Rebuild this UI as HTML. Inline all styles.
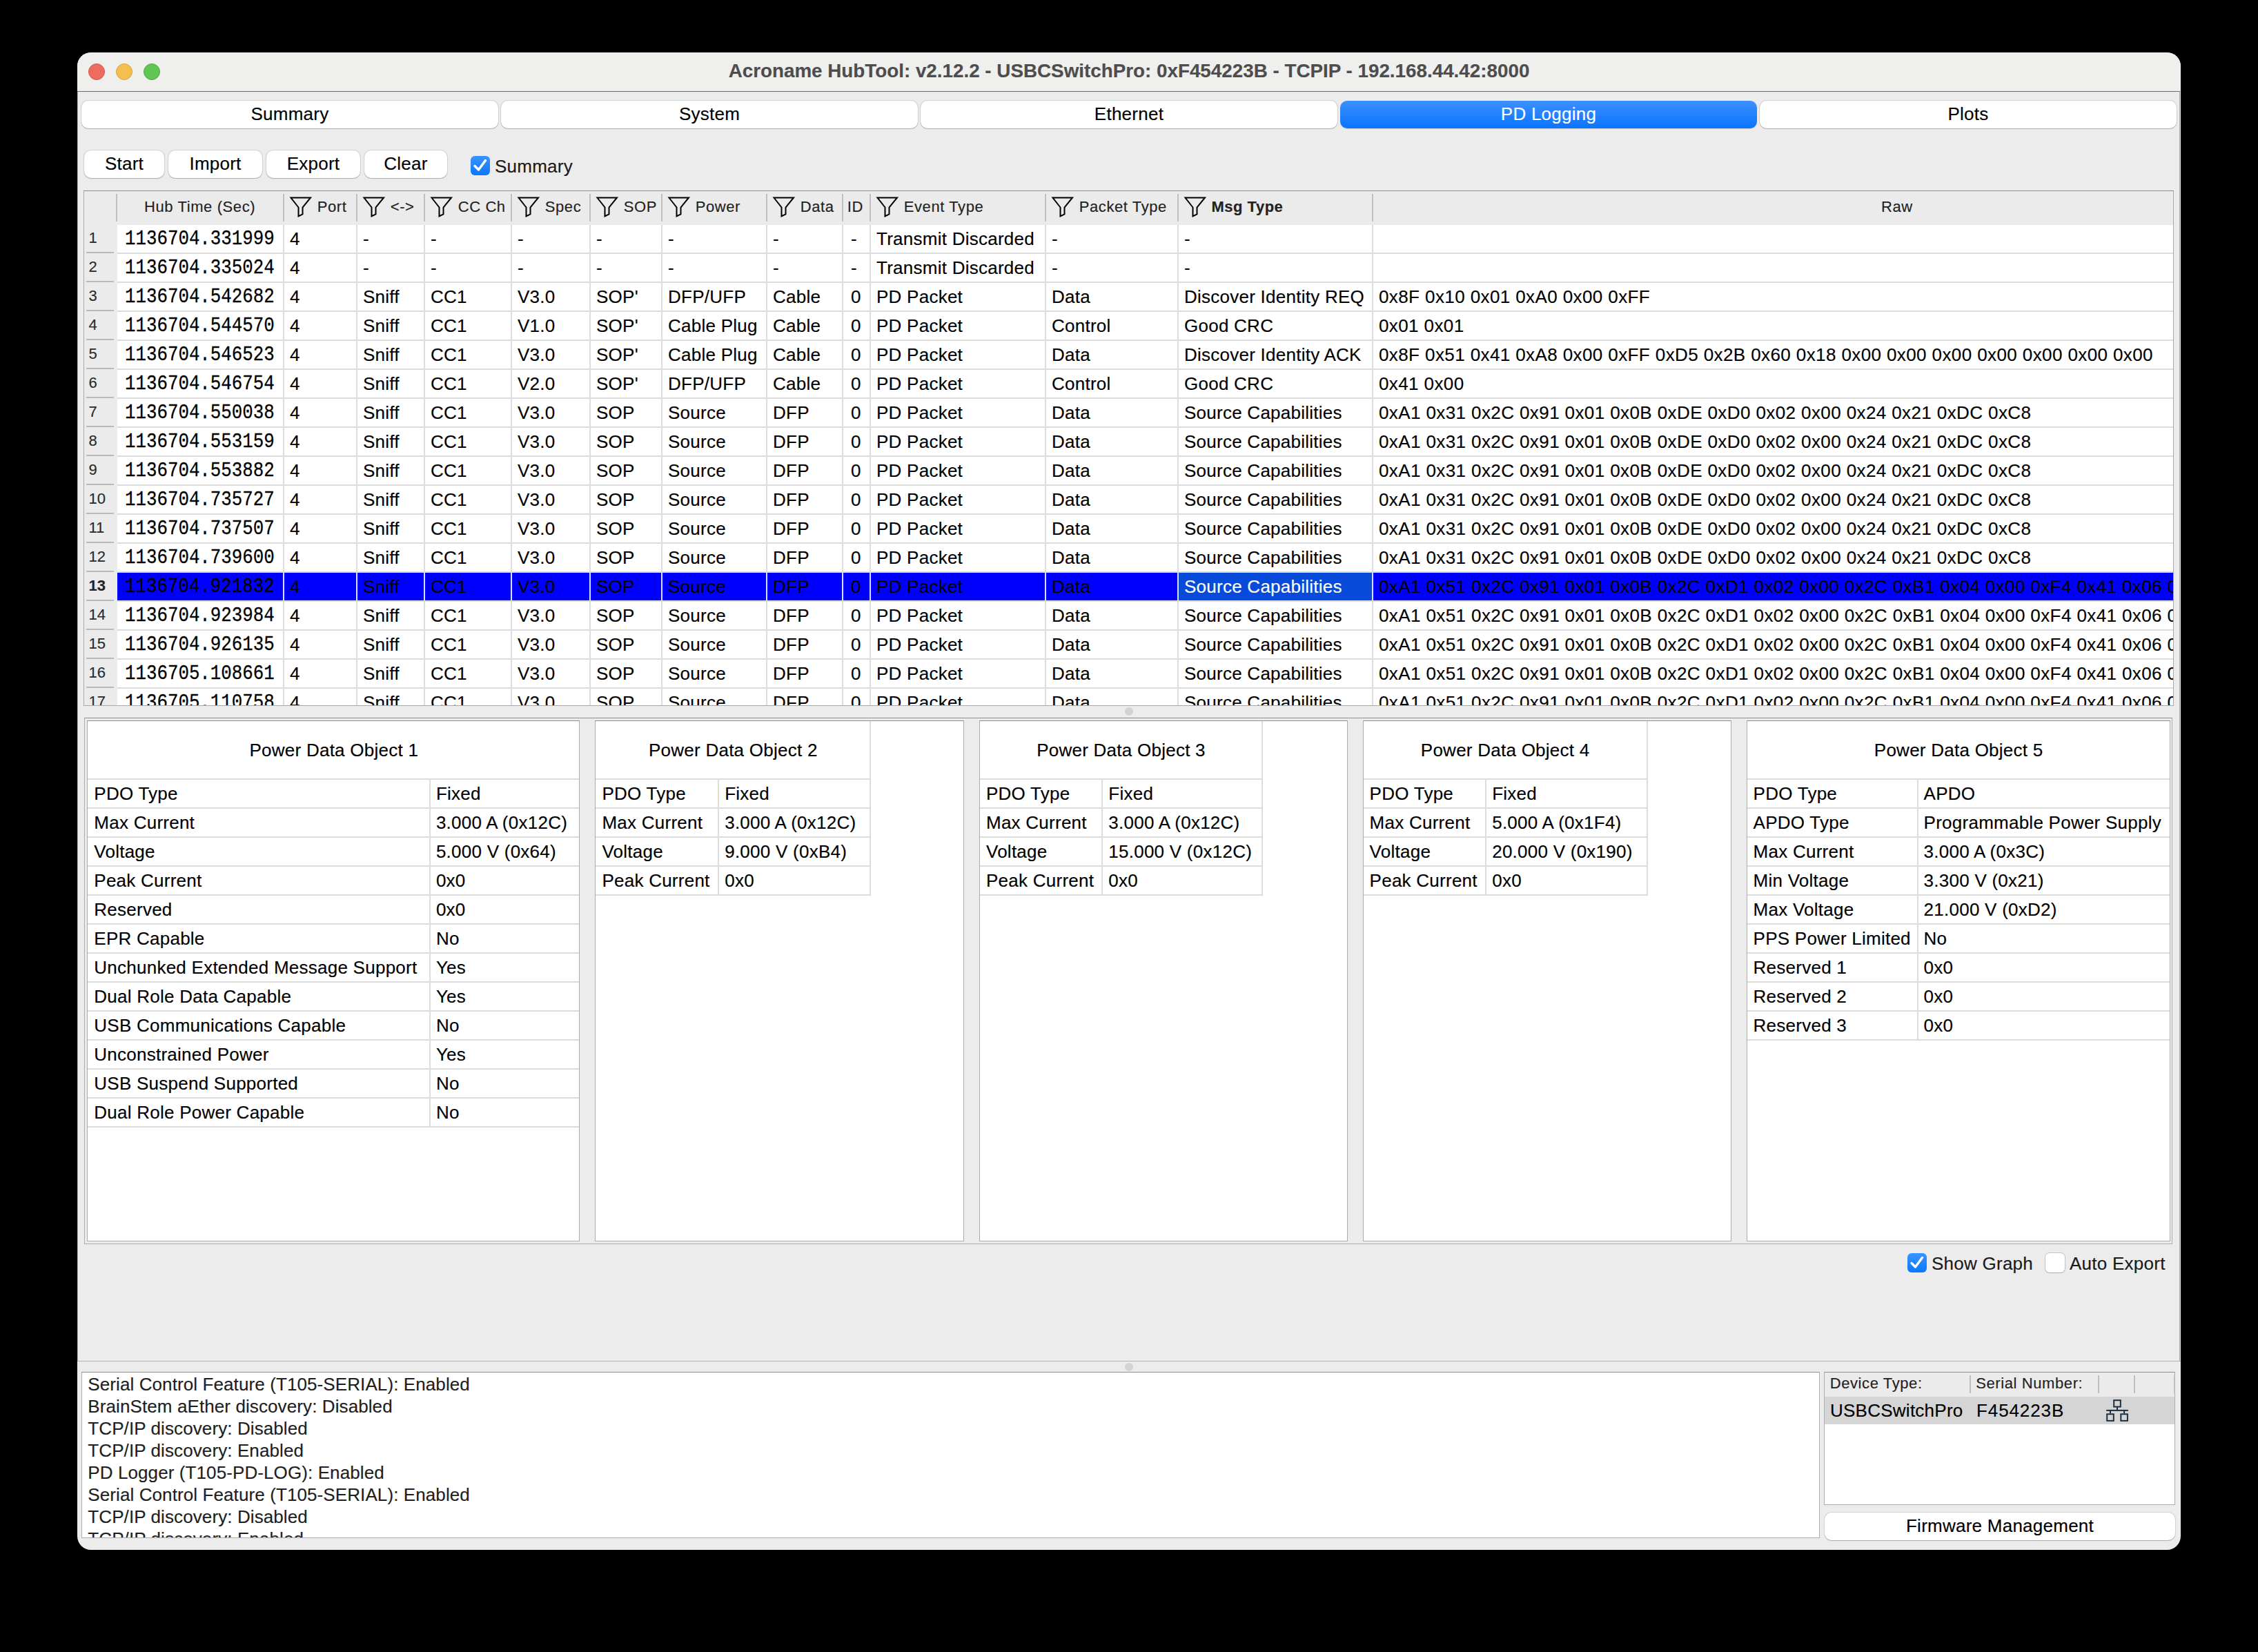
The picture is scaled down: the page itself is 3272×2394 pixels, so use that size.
<!DOCTYPE html><html><head><meta charset="utf-8"><title>Acroname HubTool</title><style>
html,body{margin:0;padding:0;}
body{width:3272px;height:2394px;background:#000;position:relative;overflow:hidden;font-family:"Liberation Sans",sans-serif;}
#win{position:absolute;left:112px;top:76px;width:3048px;height:2170px;border-radius:20px;background:#ececec;overflow:hidden;}
#win div{position:absolute;box-sizing:border-box;}
#win div.t{white-space:pre;-webkit-text-stroke:0.15px currentColor;}
#win svg{position:absolute;}
</style></head><body><div id="win">
<div style="left:0.00px;top:0.00px;width:3048.00px;height:56.00px;background:#efefee;"></div>
<div style="left:0.00px;top:56.00px;width:3047.00px;height:1.00px;background:#6b6b6b;"></div>
<div style="left:16.00px;top:16.00px;width:24.00px;height:24.00px;border-radius:50%;background:#ed6b5f;border:1px solid #d0584b;"></div>
<div style="left:56.00px;top:16.00px;width:24.00px;height:24.00px;border-radius:50%;background:#f5bf4f;border:1px solid #d9a140;"></div>
<div style="left:96.00px;top:16.00px;width:24.00px;height:24.00px;border-radius:50%;background:#61c554;border:1px solid #4fa83f;"></div>
<div class="t" style="top:12.86px;font-size:27.8px;line-height:27.8px;height:27.8px;color:#4d4d4d;font-weight:700;left:24.00px;width:3000px;text-align:center;">Acroname HubTool: v2.12.2 - USBCSwitchPro: 0xF454223B - TCPIP - 192.168.44.42:8000</div>
<div style="left:0.00px;top:57.00px;width:1.00px;height:1840.00px;background:#b4b4b4;"></div>
<div style="left:3046.00px;top:57.00px;width:1.00px;height:1840.00px;background:#a0a0a0;"></div>
<div style="left:6.00px;top:70.00px;width:604.00px;height:40.00px;border-radius:10px;background:#fff;box-shadow:0 0 0 1px rgba(0,0,0,0.10),0 1px 1px rgba(0,0,0,0.18);"></div>
<div class="t" style="top:75.79px;font-size:26px;line-height:26px;height:26px;color:#000;letter-spacing:0.25px;left:-1192.00px;width:3000px;text-align:center;">Summary</div>
<div style="left:614.00px;top:70.00px;width:604.00px;height:40.00px;border-radius:10px;background:#fff;box-shadow:0 0 0 1px rgba(0,0,0,0.10),0 1px 1px rgba(0,0,0,0.18);"></div>
<div class="t" style="top:75.79px;font-size:26px;line-height:26px;height:26px;color:#000;letter-spacing:0.25px;left:-584.00px;width:3000px;text-align:center;">System</div>
<div style="left:1222.00px;top:70.00px;width:604.00px;height:40.00px;border-radius:10px;background:#fff;box-shadow:0 0 0 1px rgba(0,0,0,0.10),0 1px 1px rgba(0,0,0,0.18);"></div>
<div class="t" style="top:75.79px;font-size:26px;line-height:26px;height:26px;color:#000;letter-spacing:0.25px;left:24.00px;width:3000px;text-align:center;">Ethernet</div>
<div style="left:1830.00px;top:70.00px;width:604.00px;height:40.00px;border-radius:10px;background:linear-gradient(#3c90fd,#0a74fe);box-shadow:0 1px 1px rgba(0,0,0,0.15);"></div>
<div class="t" style="top:75.79px;font-size:26px;line-height:26px;height:26px;color:#fff;letter-spacing:0.25px;left:632.00px;width:3000px;text-align:center;">PD Logging</div>
<div style="left:2438.00px;top:70.00px;width:604.00px;height:40.00px;border-radius:10px;background:#fff;box-shadow:0 0 0 1px rgba(0,0,0,0.10),0 1px 1px rgba(0,0,0,0.18);"></div>
<div class="t" style="top:75.79px;font-size:26px;line-height:26px;height:26px;color:#000;letter-spacing:0.25px;left:1240.00px;width:3000px;text-align:center;">Plots</div>
<div style="left:10.00px;top:142.00px;width:116.00px;height:40.00px;border-radius:10px;background:#fff;box-shadow:0 0 0 1px rgba(0,0,0,0.10),0 1px 1px rgba(0,0,0,0.18);"></div>
<div class="t" style="top:147.99px;font-size:26px;line-height:26px;height:26px;color:#000;letter-spacing:0.25px;left:-1432.00px;width:3000px;text-align:center;">Start</div>
<div style="left:132.00px;top:142.00px;width:136.00px;height:40.00px;border-radius:10px;background:#fff;box-shadow:0 0 0 1px rgba(0,0,0,0.10),0 1px 1px rgba(0,0,0,0.18);"></div>
<div class="t" style="top:147.99px;font-size:26px;line-height:26px;height:26px;color:#000;letter-spacing:0.25px;left:-1300.00px;width:3000px;text-align:center;">Import</div>
<div style="left:274.00px;top:142.00px;width:136.00px;height:40.00px;border-radius:10px;background:#fff;box-shadow:0 0 0 1px rgba(0,0,0,0.10),0 1px 1px rgba(0,0,0,0.18);"></div>
<div class="t" style="top:147.99px;font-size:26px;line-height:26px;height:26px;color:#000;letter-spacing:0.25px;left:-1158.00px;width:3000px;text-align:center;">Export</div>
<div style="left:416.00px;top:142.00px;width:120.00px;height:40.00px;border-radius:10px;background:#fff;box-shadow:0 0 0 1px rgba(0,0,0,0.10),0 1px 1px rgba(0,0,0,0.18);"></div>
<div class="t" style="top:147.99px;font-size:26px;line-height:26px;height:26px;color:#000;letter-spacing:0.25px;left:-1024.00px;width:3000px;text-align:center;">Clear</div>
<div style="left:570.00px;top:150.00px;width:28.00px;height:28.00px;border-radius:6px;background:linear-gradient(#3a94ff,#0a77ff);"></div>
<svg style="left:570px;top:150px" width="28" height="28" viewBox="0 0 28 28"><path d="M6 14.5 L11.5 20 L21.5 6.5" fill="none" stroke="#fff" stroke-width="3.4" stroke-linecap="round" stroke-linejoin="round"/></svg>
<div class="t" style="top:151.99px;font-size:26px;line-height:26px;height:26px;color:#1a1a1a;letter-spacing:0.25px;left:605.00px;">Summary</div>
<div style="left:8.50px;top:200.00px;width:3029.50px;height:746.50px;background:#fff;border:1px solid #a9a9a9;border-top-color:#8c8c8c;"></div>
<div style="left:9.50px;top:201.00px;width:3027.50px;height:49.00px;background:#ebebeb;"></div>
<div style="left:9.50px;top:250.00px;width:48.20px;height:695.50px;background:#ebebeb;"></div>
<div style="left:57.70px;top:754.00px;width:2979.30px;height:40.00px;background:#0000ff;"></div>
<div style="left:1596.00px;top:754.00px;width:280.00px;height:40.00px;background:#084bda;"></div>
<div style="left:57.70px;top:290.00px;width:2979.30px;height:2.00px;background:#dcdcdc;"></div>
<div style="left:13.00px;top:289.00px;width:40.00px;height:2.00px;background:#bababa;"></div>
<div style="left:57.70px;top:332.00px;width:2979.30px;height:2.00px;background:#dcdcdc;"></div>
<div style="left:13.00px;top:331.00px;width:40.00px;height:2.00px;background:#bababa;"></div>
<div style="left:57.70px;top:374.00px;width:2979.30px;height:2.00px;background:#dcdcdc;"></div>
<div style="left:13.00px;top:373.00px;width:40.00px;height:2.00px;background:#bababa;"></div>
<div style="left:57.70px;top:416.00px;width:2979.30px;height:2.00px;background:#dcdcdc;"></div>
<div style="left:13.00px;top:415.00px;width:40.00px;height:2.00px;background:#bababa;"></div>
<div style="left:57.70px;top:458.00px;width:2979.30px;height:2.00px;background:#dcdcdc;"></div>
<div style="left:13.00px;top:457.00px;width:40.00px;height:2.00px;background:#bababa;"></div>
<div style="left:57.70px;top:500.00px;width:2979.30px;height:2.00px;background:#dcdcdc;"></div>
<div style="left:13.00px;top:499.00px;width:40.00px;height:2.00px;background:#bababa;"></div>
<div style="left:57.70px;top:542.00px;width:2979.30px;height:2.00px;background:#dcdcdc;"></div>
<div style="left:13.00px;top:541.00px;width:40.00px;height:2.00px;background:#bababa;"></div>
<div style="left:57.70px;top:584.00px;width:2979.30px;height:2.00px;background:#dcdcdc;"></div>
<div style="left:13.00px;top:583.00px;width:40.00px;height:2.00px;background:#bababa;"></div>
<div style="left:57.70px;top:626.00px;width:2979.30px;height:2.00px;background:#dcdcdc;"></div>
<div style="left:13.00px;top:625.00px;width:40.00px;height:2.00px;background:#bababa;"></div>
<div style="left:57.70px;top:668.00px;width:2979.30px;height:2.00px;background:#dcdcdc;"></div>
<div style="left:13.00px;top:667.00px;width:40.00px;height:2.00px;background:#bababa;"></div>
<div style="left:57.70px;top:710.00px;width:2979.30px;height:2.00px;background:#dcdcdc;"></div>
<div style="left:13.00px;top:709.00px;width:40.00px;height:2.00px;background:#bababa;"></div>
<div style="left:57.70px;top:752.00px;width:2979.30px;height:2.00px;background:#dcdcdc;"></div>
<div style="left:13.00px;top:751.00px;width:40.00px;height:2.00px;background:#bababa;"></div>
<div style="left:57.70px;top:794.00px;width:2979.30px;height:2.00px;background:#dcdcdc;"></div>
<div style="left:13.00px;top:793.00px;width:40.00px;height:2.00px;background:#bababa;"></div>
<div style="left:57.70px;top:836.00px;width:2979.30px;height:2.00px;background:#dcdcdc;"></div>
<div style="left:13.00px;top:835.00px;width:40.00px;height:2.00px;background:#bababa;"></div>
<div style="left:57.70px;top:878.00px;width:2979.30px;height:2.00px;background:#dcdcdc;"></div>
<div style="left:13.00px;top:877.00px;width:40.00px;height:2.00px;background:#bababa;"></div>
<div style="left:57.70px;top:920.00px;width:2979.30px;height:2.00px;background:#dcdcdc;"></div>
<div style="left:13.00px;top:919.00px;width:40.00px;height:2.00px;background:#bababa;"></div>
<div style="left:298.00px;top:250.00px;width:2.00px;height:695.50px;background:#dcdcdc;"></div>
<div style="left:404.00px;top:250.00px;width:2.00px;height:695.50px;background:#dcdcdc;"></div>
<div style="left:502.00px;top:250.00px;width:2.00px;height:695.50px;background:#dcdcdc;"></div>
<div style="left:628.00px;top:250.00px;width:2.00px;height:695.50px;background:#dcdcdc;"></div>
<div style="left:742.00px;top:250.00px;width:2.00px;height:695.50px;background:#dcdcdc;"></div>
<div style="left:846.00px;top:250.00px;width:2.00px;height:695.50px;background:#dcdcdc;"></div>
<div style="left:998.00px;top:250.00px;width:2.00px;height:695.50px;background:#dcdcdc;"></div>
<div style="left:1108.00px;top:250.00px;width:2.00px;height:695.50px;background:#dcdcdc;"></div>
<div style="left:1148.00px;top:250.00px;width:2.00px;height:695.50px;background:#dcdcdc;"></div>
<div style="left:1402.00px;top:250.00px;width:2.00px;height:695.50px;background:#dcdcdc;"></div>
<div style="left:1594.00px;top:250.00px;width:2.00px;height:695.50px;background:#dcdcdc;"></div>
<div style="left:1876.00px;top:250.00px;width:2.00px;height:695.50px;background:#dcdcdc;"></div>
<div style="left:56.00px;top:205.00px;width:2.00px;height:40.00px;background:#c0c0c0;"></div>
<div style="left:298.00px;top:205.00px;width:2.00px;height:40.00px;background:#c0c0c0;"></div>
<div style="left:404.00px;top:205.00px;width:2.00px;height:40.00px;background:#c0c0c0;"></div>
<div style="left:502.00px;top:205.00px;width:2.00px;height:40.00px;background:#c0c0c0;"></div>
<div style="left:628.00px;top:205.00px;width:2.00px;height:40.00px;background:#c0c0c0;"></div>
<div style="left:742.00px;top:205.00px;width:2.00px;height:40.00px;background:#c0c0c0;"></div>
<div style="left:846.00px;top:205.00px;width:2.00px;height:40.00px;background:#c0c0c0;"></div>
<div style="left:998.00px;top:205.00px;width:2.00px;height:40.00px;background:#c0c0c0;"></div>
<div style="left:1108.00px;top:205.00px;width:2.00px;height:40.00px;background:#c0c0c0;"></div>
<div style="left:1148.00px;top:205.00px;width:2.00px;height:40.00px;background:#c0c0c0;"></div>
<div style="left:1402.00px;top:205.00px;width:2.00px;height:40.00px;background:#c0c0c0;"></div>
<div style="left:1594.00px;top:205.00px;width:2.00px;height:40.00px;background:#c0c0c0;"></div>
<div style="left:1876.00px;top:205.00px;width:2.00px;height:40.00px;background:#c0c0c0;"></div>
<div class="t" style="top:213.37px;font-size:22px;line-height:22px;height:22px;color:#222;letter-spacing:0.6px;left:97.00px;">Hub Time (Sec)</div>
<svg style="left:306.50px;top:208.00px" width="34" height="33" viewBox="0 0 34 33"><path d="M2.5 2.5 H31 L19.5 16.5 V26.5 L13.5 29.5 V16.5 Z" fill="none" stroke="#000" stroke-width="2.0" stroke-linejoin="miter"/></svg>
<div class="t" style="top:213.37px;font-size:22px;line-height:22px;height:22px;color:#222;letter-spacing:0.6px;left:347.70px;">Port</div>
<svg style="left:412.50px;top:208.00px" width="34" height="33" viewBox="0 0 34 33"><path d="M2.5 2.5 H31 L19.5 16.5 V26.5 L13.5 29.5 V16.5 Z" fill="none" stroke="#000" stroke-width="2.0" stroke-linejoin="miter"/></svg>
<div class="t" style="top:213.37px;font-size:22px;line-height:22px;height:22px;color:#222;letter-spacing:0.6px;left:453.70px;">&lt;-&gt;</div>
<svg style="left:510.50px;top:208.00px" width="34" height="33" viewBox="0 0 34 33"><path d="M2.5 2.5 H31 L19.5 16.5 V26.5 L13.5 29.5 V16.5 Z" fill="none" stroke="#000" stroke-width="2.0" stroke-linejoin="miter"/></svg>
<div class="t" style="top:213.37px;font-size:22px;line-height:22px;height:22px;color:#222;letter-spacing:0.6px;left:551.70px;">CC Ch</div>
<svg style="left:636.50px;top:208.00px" width="34" height="33" viewBox="0 0 34 33"><path d="M2.5 2.5 H31 L19.5 16.5 V26.5 L13.5 29.5 V16.5 Z" fill="none" stroke="#000" stroke-width="2.0" stroke-linejoin="miter"/></svg>
<div class="t" style="top:213.37px;font-size:22px;line-height:22px;height:22px;color:#222;letter-spacing:0.6px;left:677.70px;">Spec</div>
<svg style="left:750.50px;top:208.00px" width="34" height="33" viewBox="0 0 34 33"><path d="M2.5 2.5 H31 L19.5 16.5 V26.5 L13.5 29.5 V16.5 Z" fill="none" stroke="#000" stroke-width="2.0" stroke-linejoin="miter"/></svg>
<div class="t" style="top:213.37px;font-size:22px;line-height:22px;height:22px;color:#222;letter-spacing:0.6px;left:791.70px;">SOP</div>
<svg style="left:854.50px;top:208.00px" width="34" height="33" viewBox="0 0 34 33"><path d="M2.5 2.5 H31 L19.5 16.5 V26.5 L13.5 29.5 V16.5 Z" fill="none" stroke="#000" stroke-width="2.0" stroke-linejoin="miter"/></svg>
<div class="t" style="top:213.37px;font-size:22px;line-height:22px;height:22px;color:#222;letter-spacing:0.6px;left:895.70px;">Power</div>
<svg style="left:1006.50px;top:208.00px" width="34" height="33" viewBox="0 0 34 33"><path d="M2.5 2.5 H31 L19.5 16.5 V26.5 L13.5 29.5 V16.5 Z" fill="none" stroke="#000" stroke-width="2.0" stroke-linejoin="miter"/></svg>
<div class="t" style="top:213.37px;font-size:22px;line-height:22px;height:22px;color:#222;letter-spacing:0.6px;left:1047.70px;">Data</div>
<svg style="left:1156.50px;top:208.00px" width="34" height="33" viewBox="0 0 34 33"><path d="M2.5 2.5 H31 L19.5 16.5 V26.5 L13.5 29.5 V16.5 Z" fill="none" stroke="#000" stroke-width="2.0" stroke-linejoin="miter"/></svg>
<div class="t" style="top:213.37px;font-size:22px;line-height:22px;height:22px;color:#222;letter-spacing:0.6px;left:1197.70px;">Event Type</div>
<svg style="left:1410.50px;top:208.00px" width="34" height="33" viewBox="0 0 34 33"><path d="M2.5 2.5 H31 L19.5 16.5 V26.5 L13.5 29.5 V16.5 Z" fill="none" stroke="#000" stroke-width="2.0" stroke-linejoin="miter"/></svg>
<div class="t" style="top:213.37px;font-size:22px;line-height:22px;height:22px;color:#222;letter-spacing:0.6px;left:1451.70px;">Packet Type</div>
<svg style="left:1602.50px;top:208.00px" width="34" height="33" viewBox="0 0 34 33"><path d="M2.5 2.5 H31 L19.5 16.5 V26.5 L13.5 29.5 V16.5 Z" fill="none" stroke="#000" stroke-width="2.0" stroke-linejoin="miter"/></svg>
<div class="t" style="top:213.37px;font-size:22px;line-height:22px;height:22px;color:#222;font-weight:700;letter-spacing:0.5px;left:1643.50px;">Msg Type</div>
<div class="t" style="top:213.37px;font-size:22px;line-height:22px;height:22px;color:#222;letter-spacing:0.6px;left:1115.70px;">ID</div>
<div class="t" style="top:213.37px;font-size:22px;line-height:22px;height:22px;color:#222;letter-spacing:0.6px;left:2614.00px;">Raw</div>
<div style="left:9.5px;top:250px;width:3027.5px;height:695.5px;overflow:hidden;">
<div class="t" style="top:8.37px;font-size:22px;line-height:22px;height:22px;color:#2a2a2a;left:7.00px;">1</div>
<div class="t" style="top:9.23px;font-size:25.8px;line-height:25.8px;height:25.8px;color:#000;font-family:'Liberation Mono', monospace;transform:scaleY(1.12);transform-origin:0 19.77px;-webkit-text-stroke:0.25px #000;left:59.50px;">1136704.331999</div>
<div class="t" style="top:6.99px;font-size:26px;line-height:26px;height:26px;color:#000;letter-spacing:0.25px;left:298.50px;">4</div>
<div class="t" style="top:6.99px;font-size:26px;line-height:26px;height:26px;color:#000;letter-spacing:0.25px;left:404.50px;">-</div>
<div class="t" style="top:6.99px;font-size:26px;line-height:26px;height:26px;color:#000;letter-spacing:0.25px;left:502.50px;">-</div>
<div class="t" style="top:6.99px;font-size:26px;line-height:26px;height:26px;color:#000;letter-spacing:0.25px;left:628.50px;">-</div>
<div class="t" style="top:6.99px;font-size:26px;line-height:26px;height:26px;color:#000;letter-spacing:0.25px;left:742.50px;">-</div>
<div class="t" style="top:6.99px;font-size:26px;line-height:26px;height:26px;color:#000;letter-spacing:0.25px;left:846.50px;">-</div>
<div class="t" style="top:6.99px;font-size:26px;line-height:26px;height:26px;color:#000;letter-spacing:0.25px;left:998.50px;">-</div>
<div class="t" style="top:6.99px;font-size:26px;line-height:26px;height:26px;color:#000;letter-spacing:0.25px;left:1111.50px;">-</div>
<div class="t" style="top:6.99px;font-size:26px;line-height:26px;height:26px;color:#000;letter-spacing:0.25px;left:1148.50px;">Transmit Discarded</div>
<div class="t" style="top:6.99px;font-size:26px;line-height:26px;height:26px;color:#000;letter-spacing:0.25px;left:1402.50px;">-</div>
<div class="t" style="top:6.99px;font-size:26px;line-height:26px;height:26px;color:#000;letter-spacing:0.25px;left:1594.50px;">-</div>
<div class="t" style="top:50.37px;font-size:22px;line-height:22px;height:22px;color:#2a2a2a;left:7.00px;">2</div>
<div class="t" style="top:51.23px;font-size:25.8px;line-height:25.8px;height:25.8px;color:#000;font-family:'Liberation Mono', monospace;transform:scaleY(1.12);transform-origin:0 19.77px;-webkit-text-stroke:0.25px #000;left:59.50px;">1136704.335024</div>
<div class="t" style="top:48.99px;font-size:26px;line-height:26px;height:26px;color:#000;letter-spacing:0.25px;left:298.50px;">4</div>
<div class="t" style="top:48.99px;font-size:26px;line-height:26px;height:26px;color:#000;letter-spacing:0.25px;left:404.50px;">-</div>
<div class="t" style="top:48.99px;font-size:26px;line-height:26px;height:26px;color:#000;letter-spacing:0.25px;left:502.50px;">-</div>
<div class="t" style="top:48.99px;font-size:26px;line-height:26px;height:26px;color:#000;letter-spacing:0.25px;left:628.50px;">-</div>
<div class="t" style="top:48.99px;font-size:26px;line-height:26px;height:26px;color:#000;letter-spacing:0.25px;left:742.50px;">-</div>
<div class="t" style="top:48.99px;font-size:26px;line-height:26px;height:26px;color:#000;letter-spacing:0.25px;left:846.50px;">-</div>
<div class="t" style="top:48.99px;font-size:26px;line-height:26px;height:26px;color:#000;letter-spacing:0.25px;left:998.50px;">-</div>
<div class="t" style="top:48.99px;font-size:26px;line-height:26px;height:26px;color:#000;letter-spacing:0.25px;left:1111.50px;">-</div>
<div class="t" style="top:48.99px;font-size:26px;line-height:26px;height:26px;color:#000;letter-spacing:0.25px;left:1148.50px;">Transmit Discarded</div>
<div class="t" style="top:48.99px;font-size:26px;line-height:26px;height:26px;color:#000;letter-spacing:0.25px;left:1402.50px;">-</div>
<div class="t" style="top:48.99px;font-size:26px;line-height:26px;height:26px;color:#000;letter-spacing:0.25px;left:1594.50px;">-</div>
<div class="t" style="top:92.37px;font-size:22px;line-height:22px;height:22px;color:#2a2a2a;left:7.00px;">3</div>
<div class="t" style="top:93.23px;font-size:25.8px;line-height:25.8px;height:25.8px;color:#000;font-family:'Liberation Mono', monospace;transform:scaleY(1.12);transform-origin:0 19.77px;-webkit-text-stroke:0.25px #000;left:59.50px;">1136704.542682</div>
<div class="t" style="top:90.99px;font-size:26px;line-height:26px;height:26px;color:#000;letter-spacing:0.25px;left:298.50px;">4</div>
<div class="t" style="top:90.99px;font-size:26px;line-height:26px;height:26px;color:#000;letter-spacing:0.25px;left:404.50px;">Sniff</div>
<div class="t" style="top:90.99px;font-size:26px;line-height:26px;height:26px;color:#000;letter-spacing:0.25px;left:502.50px;">CC1</div>
<div class="t" style="top:90.99px;font-size:26px;line-height:26px;height:26px;color:#000;letter-spacing:0.25px;left:628.50px;">V3.0</div>
<div class="t" style="top:90.99px;font-size:26px;line-height:26px;height:26px;color:#000;letter-spacing:0.25px;left:742.50px;">SOP'</div>
<div class="t" style="top:90.99px;font-size:26px;line-height:26px;height:26px;color:#000;letter-spacing:0.25px;left:846.50px;">DFP/UFP</div>
<div class="t" style="top:90.99px;font-size:26px;line-height:26px;height:26px;color:#000;letter-spacing:0.25px;left:998.50px;">Cable</div>
<div class="t" style="top:90.99px;font-size:26px;line-height:26px;height:26px;color:#000;letter-spacing:0.25px;left:1111.50px;">0</div>
<div class="t" style="top:90.99px;font-size:26px;line-height:26px;height:26px;color:#000;letter-spacing:0.25px;left:1148.50px;">PD Packet</div>
<div class="t" style="top:90.99px;font-size:26px;line-height:26px;height:26px;color:#000;letter-spacing:0.25px;left:1402.50px;">Data</div>
<div class="t" style="top:90.99px;font-size:26px;line-height:26px;height:26px;color:#000;letter-spacing:0.25px;left:1594.50px;">Discover Identity REQ</div>
<div class="t" style="top:90.99px;font-size:26px;line-height:26px;height:26px;color:#000;letter-spacing:0.4px;left:1876.50px;">0x8F 0x10 0x01 0xA0 0x00 0xFF</div>
<div class="t" style="top:134.37px;font-size:22px;line-height:22px;height:22px;color:#2a2a2a;left:7.00px;">4</div>
<div class="t" style="top:135.23px;font-size:25.8px;line-height:25.8px;height:25.8px;color:#000;font-family:'Liberation Mono', monospace;transform:scaleY(1.12);transform-origin:0 19.77px;-webkit-text-stroke:0.25px #000;left:59.50px;">1136704.544570</div>
<div class="t" style="top:132.99px;font-size:26px;line-height:26px;height:26px;color:#000;letter-spacing:0.25px;left:298.50px;">4</div>
<div class="t" style="top:132.99px;font-size:26px;line-height:26px;height:26px;color:#000;letter-spacing:0.25px;left:404.50px;">Sniff</div>
<div class="t" style="top:132.99px;font-size:26px;line-height:26px;height:26px;color:#000;letter-spacing:0.25px;left:502.50px;">CC1</div>
<div class="t" style="top:132.99px;font-size:26px;line-height:26px;height:26px;color:#000;letter-spacing:0.25px;left:628.50px;">V1.0</div>
<div class="t" style="top:132.99px;font-size:26px;line-height:26px;height:26px;color:#000;letter-spacing:0.25px;left:742.50px;">SOP'</div>
<div class="t" style="top:132.99px;font-size:26px;line-height:26px;height:26px;color:#000;letter-spacing:0.25px;left:846.50px;">Cable Plug</div>
<div class="t" style="top:132.99px;font-size:26px;line-height:26px;height:26px;color:#000;letter-spacing:0.25px;left:998.50px;">Cable</div>
<div class="t" style="top:132.99px;font-size:26px;line-height:26px;height:26px;color:#000;letter-spacing:0.25px;left:1111.50px;">0</div>
<div class="t" style="top:132.99px;font-size:26px;line-height:26px;height:26px;color:#000;letter-spacing:0.25px;left:1148.50px;">PD Packet</div>
<div class="t" style="top:132.99px;font-size:26px;line-height:26px;height:26px;color:#000;letter-spacing:0.25px;left:1402.50px;">Control</div>
<div class="t" style="top:132.99px;font-size:26px;line-height:26px;height:26px;color:#000;letter-spacing:0.25px;left:1594.50px;">Good CRC</div>
<div class="t" style="top:132.99px;font-size:26px;line-height:26px;height:26px;color:#000;letter-spacing:0.4px;left:1876.50px;">0x01 0x01</div>
<div class="t" style="top:176.37px;font-size:22px;line-height:22px;height:22px;color:#2a2a2a;left:7.00px;">5</div>
<div class="t" style="top:177.23px;font-size:25.8px;line-height:25.8px;height:25.8px;color:#000;font-family:'Liberation Mono', monospace;transform:scaleY(1.12);transform-origin:0 19.77px;-webkit-text-stroke:0.25px #000;left:59.50px;">1136704.546523</div>
<div class="t" style="top:174.99px;font-size:26px;line-height:26px;height:26px;color:#000;letter-spacing:0.25px;left:298.50px;">4</div>
<div class="t" style="top:174.99px;font-size:26px;line-height:26px;height:26px;color:#000;letter-spacing:0.25px;left:404.50px;">Sniff</div>
<div class="t" style="top:174.99px;font-size:26px;line-height:26px;height:26px;color:#000;letter-spacing:0.25px;left:502.50px;">CC1</div>
<div class="t" style="top:174.99px;font-size:26px;line-height:26px;height:26px;color:#000;letter-spacing:0.25px;left:628.50px;">V3.0</div>
<div class="t" style="top:174.99px;font-size:26px;line-height:26px;height:26px;color:#000;letter-spacing:0.25px;left:742.50px;">SOP'</div>
<div class="t" style="top:174.99px;font-size:26px;line-height:26px;height:26px;color:#000;letter-spacing:0.25px;left:846.50px;">Cable Plug</div>
<div class="t" style="top:174.99px;font-size:26px;line-height:26px;height:26px;color:#000;letter-spacing:0.25px;left:998.50px;">Cable</div>
<div class="t" style="top:174.99px;font-size:26px;line-height:26px;height:26px;color:#000;letter-spacing:0.25px;left:1111.50px;">0</div>
<div class="t" style="top:174.99px;font-size:26px;line-height:26px;height:26px;color:#000;letter-spacing:0.25px;left:1148.50px;">PD Packet</div>
<div class="t" style="top:174.99px;font-size:26px;line-height:26px;height:26px;color:#000;letter-spacing:0.25px;left:1402.50px;">Data</div>
<div class="t" style="top:174.99px;font-size:26px;line-height:26px;height:26px;color:#000;letter-spacing:0.25px;left:1594.50px;">Discover Identity ACK</div>
<div class="t" style="top:174.99px;font-size:26px;line-height:26px;height:26px;color:#000;letter-spacing:0.4px;left:1876.50px;">0x8F 0x51 0x41 0xA8 0x00 0xFF 0xD5 0x2B 0x60 0x18 0x00 0x00 0x00 0x00 0x00 0x00 0x00</div>
<div class="t" style="top:218.37px;font-size:22px;line-height:22px;height:22px;color:#2a2a2a;left:7.00px;">6</div>
<div class="t" style="top:219.23px;font-size:25.8px;line-height:25.8px;height:25.8px;color:#000;font-family:'Liberation Mono', monospace;transform:scaleY(1.12);transform-origin:0 19.77px;-webkit-text-stroke:0.25px #000;left:59.50px;">1136704.546754</div>
<div class="t" style="top:216.99px;font-size:26px;line-height:26px;height:26px;color:#000;letter-spacing:0.25px;left:298.50px;">4</div>
<div class="t" style="top:216.99px;font-size:26px;line-height:26px;height:26px;color:#000;letter-spacing:0.25px;left:404.50px;">Sniff</div>
<div class="t" style="top:216.99px;font-size:26px;line-height:26px;height:26px;color:#000;letter-spacing:0.25px;left:502.50px;">CC1</div>
<div class="t" style="top:216.99px;font-size:26px;line-height:26px;height:26px;color:#000;letter-spacing:0.25px;left:628.50px;">V2.0</div>
<div class="t" style="top:216.99px;font-size:26px;line-height:26px;height:26px;color:#000;letter-spacing:0.25px;left:742.50px;">SOP'</div>
<div class="t" style="top:216.99px;font-size:26px;line-height:26px;height:26px;color:#000;letter-spacing:0.25px;left:846.50px;">DFP/UFP</div>
<div class="t" style="top:216.99px;font-size:26px;line-height:26px;height:26px;color:#000;letter-spacing:0.25px;left:998.50px;">Cable</div>
<div class="t" style="top:216.99px;font-size:26px;line-height:26px;height:26px;color:#000;letter-spacing:0.25px;left:1111.50px;">0</div>
<div class="t" style="top:216.99px;font-size:26px;line-height:26px;height:26px;color:#000;letter-spacing:0.25px;left:1148.50px;">PD Packet</div>
<div class="t" style="top:216.99px;font-size:26px;line-height:26px;height:26px;color:#000;letter-spacing:0.25px;left:1402.50px;">Control</div>
<div class="t" style="top:216.99px;font-size:26px;line-height:26px;height:26px;color:#000;letter-spacing:0.25px;left:1594.50px;">Good CRC</div>
<div class="t" style="top:216.99px;font-size:26px;line-height:26px;height:26px;color:#000;letter-spacing:0.4px;left:1876.50px;">0x41 0x00</div>
<div class="t" style="top:260.37px;font-size:22px;line-height:22px;height:22px;color:#2a2a2a;left:7.00px;">7</div>
<div class="t" style="top:261.23px;font-size:25.8px;line-height:25.8px;height:25.8px;color:#000;font-family:'Liberation Mono', monospace;transform:scaleY(1.12);transform-origin:0 19.77px;-webkit-text-stroke:0.25px #000;left:59.50px;">1136704.550038</div>
<div class="t" style="top:258.99px;font-size:26px;line-height:26px;height:26px;color:#000;letter-spacing:0.25px;left:298.50px;">4</div>
<div class="t" style="top:258.99px;font-size:26px;line-height:26px;height:26px;color:#000;letter-spacing:0.25px;left:404.50px;">Sniff</div>
<div class="t" style="top:258.99px;font-size:26px;line-height:26px;height:26px;color:#000;letter-spacing:0.25px;left:502.50px;">CC1</div>
<div class="t" style="top:258.99px;font-size:26px;line-height:26px;height:26px;color:#000;letter-spacing:0.25px;left:628.50px;">V3.0</div>
<div class="t" style="top:258.99px;font-size:26px;line-height:26px;height:26px;color:#000;letter-spacing:0.25px;left:742.50px;">SOP</div>
<div class="t" style="top:258.99px;font-size:26px;line-height:26px;height:26px;color:#000;letter-spacing:0.25px;left:846.50px;">Source</div>
<div class="t" style="top:258.99px;font-size:26px;line-height:26px;height:26px;color:#000;letter-spacing:0.25px;left:998.50px;">DFP</div>
<div class="t" style="top:258.99px;font-size:26px;line-height:26px;height:26px;color:#000;letter-spacing:0.25px;left:1111.50px;">0</div>
<div class="t" style="top:258.99px;font-size:26px;line-height:26px;height:26px;color:#000;letter-spacing:0.25px;left:1148.50px;">PD Packet</div>
<div class="t" style="top:258.99px;font-size:26px;line-height:26px;height:26px;color:#000;letter-spacing:0.25px;left:1402.50px;">Data</div>
<div class="t" style="top:258.99px;font-size:26px;line-height:26px;height:26px;color:#000;letter-spacing:0.25px;left:1594.50px;">Source Capabilities</div>
<div class="t" style="top:258.99px;font-size:26px;line-height:26px;height:26px;color:#000;letter-spacing:0.4px;left:1876.50px;">0xA1 0x31 0x2C 0x91 0x01 0x0B 0xDE 0xD0 0x02 0x00 0x24 0x21 0xDC 0xC8</div>
<div class="t" style="top:302.37px;font-size:22px;line-height:22px;height:22px;color:#2a2a2a;left:7.00px;">8</div>
<div class="t" style="top:303.23px;font-size:25.8px;line-height:25.8px;height:25.8px;color:#000;font-family:'Liberation Mono', monospace;transform:scaleY(1.12);transform-origin:0 19.77px;-webkit-text-stroke:0.25px #000;left:59.50px;">1136704.553159</div>
<div class="t" style="top:300.99px;font-size:26px;line-height:26px;height:26px;color:#000;letter-spacing:0.25px;left:298.50px;">4</div>
<div class="t" style="top:300.99px;font-size:26px;line-height:26px;height:26px;color:#000;letter-spacing:0.25px;left:404.50px;">Sniff</div>
<div class="t" style="top:300.99px;font-size:26px;line-height:26px;height:26px;color:#000;letter-spacing:0.25px;left:502.50px;">CC1</div>
<div class="t" style="top:300.99px;font-size:26px;line-height:26px;height:26px;color:#000;letter-spacing:0.25px;left:628.50px;">V3.0</div>
<div class="t" style="top:300.99px;font-size:26px;line-height:26px;height:26px;color:#000;letter-spacing:0.25px;left:742.50px;">SOP</div>
<div class="t" style="top:300.99px;font-size:26px;line-height:26px;height:26px;color:#000;letter-spacing:0.25px;left:846.50px;">Source</div>
<div class="t" style="top:300.99px;font-size:26px;line-height:26px;height:26px;color:#000;letter-spacing:0.25px;left:998.50px;">DFP</div>
<div class="t" style="top:300.99px;font-size:26px;line-height:26px;height:26px;color:#000;letter-spacing:0.25px;left:1111.50px;">0</div>
<div class="t" style="top:300.99px;font-size:26px;line-height:26px;height:26px;color:#000;letter-spacing:0.25px;left:1148.50px;">PD Packet</div>
<div class="t" style="top:300.99px;font-size:26px;line-height:26px;height:26px;color:#000;letter-spacing:0.25px;left:1402.50px;">Data</div>
<div class="t" style="top:300.99px;font-size:26px;line-height:26px;height:26px;color:#000;letter-spacing:0.25px;left:1594.50px;">Source Capabilities</div>
<div class="t" style="top:300.99px;font-size:26px;line-height:26px;height:26px;color:#000;letter-spacing:0.4px;left:1876.50px;">0xA1 0x31 0x2C 0x91 0x01 0x0B 0xDE 0xD0 0x02 0x00 0x24 0x21 0xDC 0xC8</div>
<div class="t" style="top:344.37px;font-size:22px;line-height:22px;height:22px;color:#2a2a2a;left:7.00px;">9</div>
<div class="t" style="top:345.23px;font-size:25.8px;line-height:25.8px;height:25.8px;color:#000;font-family:'Liberation Mono', monospace;transform:scaleY(1.12);transform-origin:0 19.77px;-webkit-text-stroke:0.25px #000;left:59.50px;">1136704.553882</div>
<div class="t" style="top:342.99px;font-size:26px;line-height:26px;height:26px;color:#000;letter-spacing:0.25px;left:298.50px;">4</div>
<div class="t" style="top:342.99px;font-size:26px;line-height:26px;height:26px;color:#000;letter-spacing:0.25px;left:404.50px;">Sniff</div>
<div class="t" style="top:342.99px;font-size:26px;line-height:26px;height:26px;color:#000;letter-spacing:0.25px;left:502.50px;">CC1</div>
<div class="t" style="top:342.99px;font-size:26px;line-height:26px;height:26px;color:#000;letter-spacing:0.25px;left:628.50px;">V3.0</div>
<div class="t" style="top:342.99px;font-size:26px;line-height:26px;height:26px;color:#000;letter-spacing:0.25px;left:742.50px;">SOP</div>
<div class="t" style="top:342.99px;font-size:26px;line-height:26px;height:26px;color:#000;letter-spacing:0.25px;left:846.50px;">Source</div>
<div class="t" style="top:342.99px;font-size:26px;line-height:26px;height:26px;color:#000;letter-spacing:0.25px;left:998.50px;">DFP</div>
<div class="t" style="top:342.99px;font-size:26px;line-height:26px;height:26px;color:#000;letter-spacing:0.25px;left:1111.50px;">0</div>
<div class="t" style="top:342.99px;font-size:26px;line-height:26px;height:26px;color:#000;letter-spacing:0.25px;left:1148.50px;">PD Packet</div>
<div class="t" style="top:342.99px;font-size:26px;line-height:26px;height:26px;color:#000;letter-spacing:0.25px;left:1402.50px;">Data</div>
<div class="t" style="top:342.99px;font-size:26px;line-height:26px;height:26px;color:#000;letter-spacing:0.25px;left:1594.50px;">Source Capabilities</div>
<div class="t" style="top:342.99px;font-size:26px;line-height:26px;height:26px;color:#000;letter-spacing:0.4px;left:1876.50px;">0xA1 0x31 0x2C 0x91 0x01 0x0B 0xDE 0xD0 0x02 0x00 0x24 0x21 0xDC 0xC8</div>
<div class="t" style="top:386.37px;font-size:22px;line-height:22px;height:22px;color:#2a2a2a;left:7.00px;">10</div>
<div class="t" style="top:387.23px;font-size:25.8px;line-height:25.8px;height:25.8px;color:#000;font-family:'Liberation Mono', monospace;transform:scaleY(1.12);transform-origin:0 19.77px;-webkit-text-stroke:0.25px #000;left:59.50px;">1136704.735727</div>
<div class="t" style="top:384.99px;font-size:26px;line-height:26px;height:26px;color:#000;letter-spacing:0.25px;left:298.50px;">4</div>
<div class="t" style="top:384.99px;font-size:26px;line-height:26px;height:26px;color:#000;letter-spacing:0.25px;left:404.50px;">Sniff</div>
<div class="t" style="top:384.99px;font-size:26px;line-height:26px;height:26px;color:#000;letter-spacing:0.25px;left:502.50px;">CC1</div>
<div class="t" style="top:384.99px;font-size:26px;line-height:26px;height:26px;color:#000;letter-spacing:0.25px;left:628.50px;">V3.0</div>
<div class="t" style="top:384.99px;font-size:26px;line-height:26px;height:26px;color:#000;letter-spacing:0.25px;left:742.50px;">SOP</div>
<div class="t" style="top:384.99px;font-size:26px;line-height:26px;height:26px;color:#000;letter-spacing:0.25px;left:846.50px;">Source</div>
<div class="t" style="top:384.99px;font-size:26px;line-height:26px;height:26px;color:#000;letter-spacing:0.25px;left:998.50px;">DFP</div>
<div class="t" style="top:384.99px;font-size:26px;line-height:26px;height:26px;color:#000;letter-spacing:0.25px;left:1111.50px;">0</div>
<div class="t" style="top:384.99px;font-size:26px;line-height:26px;height:26px;color:#000;letter-spacing:0.25px;left:1148.50px;">PD Packet</div>
<div class="t" style="top:384.99px;font-size:26px;line-height:26px;height:26px;color:#000;letter-spacing:0.25px;left:1402.50px;">Data</div>
<div class="t" style="top:384.99px;font-size:26px;line-height:26px;height:26px;color:#000;letter-spacing:0.25px;left:1594.50px;">Source Capabilities</div>
<div class="t" style="top:384.99px;font-size:26px;line-height:26px;height:26px;color:#000;letter-spacing:0.4px;left:1876.50px;">0xA1 0x31 0x2C 0x91 0x01 0x0B 0xDE 0xD0 0x02 0x00 0x24 0x21 0xDC 0xC8</div>
<div class="t" style="top:428.37px;font-size:22px;line-height:22px;height:22px;color:#2a2a2a;left:7.00px;">11</div>
<div class="t" style="top:429.23px;font-size:25.8px;line-height:25.8px;height:25.8px;color:#000;font-family:'Liberation Mono', monospace;transform:scaleY(1.12);transform-origin:0 19.77px;-webkit-text-stroke:0.25px #000;left:59.50px;">1136704.737507</div>
<div class="t" style="top:426.99px;font-size:26px;line-height:26px;height:26px;color:#000;letter-spacing:0.25px;left:298.50px;">4</div>
<div class="t" style="top:426.99px;font-size:26px;line-height:26px;height:26px;color:#000;letter-spacing:0.25px;left:404.50px;">Sniff</div>
<div class="t" style="top:426.99px;font-size:26px;line-height:26px;height:26px;color:#000;letter-spacing:0.25px;left:502.50px;">CC1</div>
<div class="t" style="top:426.99px;font-size:26px;line-height:26px;height:26px;color:#000;letter-spacing:0.25px;left:628.50px;">V3.0</div>
<div class="t" style="top:426.99px;font-size:26px;line-height:26px;height:26px;color:#000;letter-spacing:0.25px;left:742.50px;">SOP</div>
<div class="t" style="top:426.99px;font-size:26px;line-height:26px;height:26px;color:#000;letter-spacing:0.25px;left:846.50px;">Source</div>
<div class="t" style="top:426.99px;font-size:26px;line-height:26px;height:26px;color:#000;letter-spacing:0.25px;left:998.50px;">DFP</div>
<div class="t" style="top:426.99px;font-size:26px;line-height:26px;height:26px;color:#000;letter-spacing:0.25px;left:1111.50px;">0</div>
<div class="t" style="top:426.99px;font-size:26px;line-height:26px;height:26px;color:#000;letter-spacing:0.25px;left:1148.50px;">PD Packet</div>
<div class="t" style="top:426.99px;font-size:26px;line-height:26px;height:26px;color:#000;letter-spacing:0.25px;left:1402.50px;">Data</div>
<div class="t" style="top:426.99px;font-size:26px;line-height:26px;height:26px;color:#000;letter-spacing:0.25px;left:1594.50px;">Source Capabilities</div>
<div class="t" style="top:426.99px;font-size:26px;line-height:26px;height:26px;color:#000;letter-spacing:0.4px;left:1876.50px;">0xA1 0x31 0x2C 0x91 0x01 0x0B 0xDE 0xD0 0x02 0x00 0x24 0x21 0xDC 0xC8</div>
<div class="t" style="top:470.37px;font-size:22px;line-height:22px;height:22px;color:#2a2a2a;left:7.00px;">12</div>
<div class="t" style="top:471.23px;font-size:25.8px;line-height:25.8px;height:25.8px;color:#000;font-family:'Liberation Mono', monospace;transform:scaleY(1.12);transform-origin:0 19.77px;-webkit-text-stroke:0.25px #000;left:59.50px;">1136704.739600</div>
<div class="t" style="top:468.99px;font-size:26px;line-height:26px;height:26px;color:#000;letter-spacing:0.25px;left:298.50px;">4</div>
<div class="t" style="top:468.99px;font-size:26px;line-height:26px;height:26px;color:#000;letter-spacing:0.25px;left:404.50px;">Sniff</div>
<div class="t" style="top:468.99px;font-size:26px;line-height:26px;height:26px;color:#000;letter-spacing:0.25px;left:502.50px;">CC1</div>
<div class="t" style="top:468.99px;font-size:26px;line-height:26px;height:26px;color:#000;letter-spacing:0.25px;left:628.50px;">V3.0</div>
<div class="t" style="top:468.99px;font-size:26px;line-height:26px;height:26px;color:#000;letter-spacing:0.25px;left:742.50px;">SOP</div>
<div class="t" style="top:468.99px;font-size:26px;line-height:26px;height:26px;color:#000;letter-spacing:0.25px;left:846.50px;">Source</div>
<div class="t" style="top:468.99px;font-size:26px;line-height:26px;height:26px;color:#000;letter-spacing:0.25px;left:998.50px;">DFP</div>
<div class="t" style="top:468.99px;font-size:26px;line-height:26px;height:26px;color:#000;letter-spacing:0.25px;left:1111.50px;">0</div>
<div class="t" style="top:468.99px;font-size:26px;line-height:26px;height:26px;color:#000;letter-spacing:0.25px;left:1148.50px;">PD Packet</div>
<div class="t" style="top:468.99px;font-size:26px;line-height:26px;height:26px;color:#000;letter-spacing:0.25px;left:1402.50px;">Data</div>
<div class="t" style="top:468.99px;font-size:26px;line-height:26px;height:26px;color:#000;letter-spacing:0.25px;left:1594.50px;">Source Capabilities</div>
<div class="t" style="top:468.99px;font-size:26px;line-height:26px;height:26px;color:#000;letter-spacing:0.4px;left:1876.50px;">0xA1 0x31 0x2C 0x91 0x01 0x0B 0xDE 0xD0 0x02 0x00 0x24 0x21 0xDC 0xC8</div>
<div class="t" style="top:512.37px;font-size:22px;line-height:22px;height:22px;color:#222;font-weight:700;left:7.00px;">13</div>
<div class="t" style="top:513.23px;font-size:25.8px;line-height:25.8px;height:25.8px;color:#000;font-family:'Liberation Mono', monospace;transform:scaleY(1.12);transform-origin:0 19.77px;-webkit-text-stroke:0.25px #000;left:59.50px;">1136704.921832</div>
<div class="t" style="top:510.99px;font-size:26px;line-height:26px;height:26px;color:#000;letter-spacing:0.25px;left:298.50px;">4</div>
<div class="t" style="top:510.99px;font-size:26px;line-height:26px;height:26px;color:#000;letter-spacing:0.25px;left:404.50px;">Sniff</div>
<div class="t" style="top:510.99px;font-size:26px;line-height:26px;height:26px;color:#000;letter-spacing:0.25px;left:502.50px;">CC1</div>
<div class="t" style="top:510.99px;font-size:26px;line-height:26px;height:26px;color:#000;letter-spacing:0.25px;left:628.50px;">V3.0</div>
<div class="t" style="top:510.99px;font-size:26px;line-height:26px;height:26px;color:#000;letter-spacing:0.25px;left:742.50px;">SOP</div>
<div class="t" style="top:510.99px;font-size:26px;line-height:26px;height:26px;color:#000;letter-spacing:0.25px;left:846.50px;">Source</div>
<div class="t" style="top:510.99px;font-size:26px;line-height:26px;height:26px;color:#000;letter-spacing:0.25px;left:998.50px;">DFP</div>
<div class="t" style="top:510.99px;font-size:26px;line-height:26px;height:26px;color:#000;letter-spacing:0.25px;left:1111.50px;">0</div>
<div class="t" style="top:510.99px;font-size:26px;line-height:26px;height:26px;color:#000;letter-spacing:0.25px;left:1148.50px;">PD Packet</div>
<div class="t" style="top:510.99px;font-size:26px;line-height:26px;height:26px;color:#000;letter-spacing:0.25px;left:1402.50px;">Data</div>
<div class="t" style="top:510.99px;font-size:26px;line-height:26px;height:26px;color:#fff;letter-spacing:0.25px;left:1594.50px;">Source Capabilities</div>
<div class="t" style="top:510.99px;font-size:26px;line-height:26px;height:26px;color:#000;letter-spacing:0.4px;left:1876.50px;">0xA1 0x51 0x2C 0x91 0x01 0x0B 0x2C 0xD1 0x02 0x00 0x2C 0xB1 0x04 0x00 0xF4 0x41 0x06 0x00 0x00</div>
<div class="t" style="top:554.37px;font-size:22px;line-height:22px;height:22px;color:#2a2a2a;left:7.00px;">14</div>
<div class="t" style="top:555.23px;font-size:25.8px;line-height:25.8px;height:25.8px;color:#000;font-family:'Liberation Mono', monospace;transform:scaleY(1.12);transform-origin:0 19.77px;-webkit-text-stroke:0.25px #000;left:59.50px;">1136704.923984</div>
<div class="t" style="top:552.99px;font-size:26px;line-height:26px;height:26px;color:#000;letter-spacing:0.25px;left:298.50px;">4</div>
<div class="t" style="top:552.99px;font-size:26px;line-height:26px;height:26px;color:#000;letter-spacing:0.25px;left:404.50px;">Sniff</div>
<div class="t" style="top:552.99px;font-size:26px;line-height:26px;height:26px;color:#000;letter-spacing:0.25px;left:502.50px;">CC1</div>
<div class="t" style="top:552.99px;font-size:26px;line-height:26px;height:26px;color:#000;letter-spacing:0.25px;left:628.50px;">V3.0</div>
<div class="t" style="top:552.99px;font-size:26px;line-height:26px;height:26px;color:#000;letter-spacing:0.25px;left:742.50px;">SOP</div>
<div class="t" style="top:552.99px;font-size:26px;line-height:26px;height:26px;color:#000;letter-spacing:0.25px;left:846.50px;">Source</div>
<div class="t" style="top:552.99px;font-size:26px;line-height:26px;height:26px;color:#000;letter-spacing:0.25px;left:998.50px;">DFP</div>
<div class="t" style="top:552.99px;font-size:26px;line-height:26px;height:26px;color:#000;letter-spacing:0.25px;left:1111.50px;">0</div>
<div class="t" style="top:552.99px;font-size:26px;line-height:26px;height:26px;color:#000;letter-spacing:0.25px;left:1148.50px;">PD Packet</div>
<div class="t" style="top:552.99px;font-size:26px;line-height:26px;height:26px;color:#000;letter-spacing:0.25px;left:1402.50px;">Data</div>
<div class="t" style="top:552.99px;font-size:26px;line-height:26px;height:26px;color:#000;letter-spacing:0.25px;left:1594.50px;">Source Capabilities</div>
<div class="t" style="top:552.99px;font-size:26px;line-height:26px;height:26px;color:#000;letter-spacing:0.4px;left:1876.50px;">0xA1 0x51 0x2C 0x91 0x01 0x0B 0x2C 0xD1 0x02 0x00 0x2C 0xB1 0x04 0x00 0xF4 0x41 0x06 0x00 0x00</div>
<div class="t" style="top:596.37px;font-size:22px;line-height:22px;height:22px;color:#2a2a2a;left:7.00px;">15</div>
<div class="t" style="top:597.23px;font-size:25.8px;line-height:25.8px;height:25.8px;color:#000;font-family:'Liberation Mono', monospace;transform:scaleY(1.12);transform-origin:0 19.77px;-webkit-text-stroke:0.25px #000;left:59.50px;">1136704.926135</div>
<div class="t" style="top:594.99px;font-size:26px;line-height:26px;height:26px;color:#000;letter-spacing:0.25px;left:298.50px;">4</div>
<div class="t" style="top:594.99px;font-size:26px;line-height:26px;height:26px;color:#000;letter-spacing:0.25px;left:404.50px;">Sniff</div>
<div class="t" style="top:594.99px;font-size:26px;line-height:26px;height:26px;color:#000;letter-spacing:0.25px;left:502.50px;">CC1</div>
<div class="t" style="top:594.99px;font-size:26px;line-height:26px;height:26px;color:#000;letter-spacing:0.25px;left:628.50px;">V3.0</div>
<div class="t" style="top:594.99px;font-size:26px;line-height:26px;height:26px;color:#000;letter-spacing:0.25px;left:742.50px;">SOP</div>
<div class="t" style="top:594.99px;font-size:26px;line-height:26px;height:26px;color:#000;letter-spacing:0.25px;left:846.50px;">Source</div>
<div class="t" style="top:594.99px;font-size:26px;line-height:26px;height:26px;color:#000;letter-spacing:0.25px;left:998.50px;">DFP</div>
<div class="t" style="top:594.99px;font-size:26px;line-height:26px;height:26px;color:#000;letter-spacing:0.25px;left:1111.50px;">0</div>
<div class="t" style="top:594.99px;font-size:26px;line-height:26px;height:26px;color:#000;letter-spacing:0.25px;left:1148.50px;">PD Packet</div>
<div class="t" style="top:594.99px;font-size:26px;line-height:26px;height:26px;color:#000;letter-spacing:0.25px;left:1402.50px;">Data</div>
<div class="t" style="top:594.99px;font-size:26px;line-height:26px;height:26px;color:#000;letter-spacing:0.25px;left:1594.50px;">Source Capabilities</div>
<div class="t" style="top:594.99px;font-size:26px;line-height:26px;height:26px;color:#000;letter-spacing:0.4px;left:1876.50px;">0xA1 0x51 0x2C 0x91 0x01 0x0B 0x2C 0xD1 0x02 0x00 0x2C 0xB1 0x04 0x00 0xF4 0x41 0x06 0x00 0x00</div>
<div class="t" style="top:638.37px;font-size:22px;line-height:22px;height:22px;color:#2a2a2a;left:7.00px;">16</div>
<div class="t" style="top:639.23px;font-size:25.8px;line-height:25.8px;height:25.8px;color:#000;font-family:'Liberation Mono', monospace;transform:scaleY(1.12);transform-origin:0 19.77px;-webkit-text-stroke:0.25px #000;left:59.50px;">1136705.108661</div>
<div class="t" style="top:636.99px;font-size:26px;line-height:26px;height:26px;color:#000;letter-spacing:0.25px;left:298.50px;">4</div>
<div class="t" style="top:636.99px;font-size:26px;line-height:26px;height:26px;color:#000;letter-spacing:0.25px;left:404.50px;">Sniff</div>
<div class="t" style="top:636.99px;font-size:26px;line-height:26px;height:26px;color:#000;letter-spacing:0.25px;left:502.50px;">CC1</div>
<div class="t" style="top:636.99px;font-size:26px;line-height:26px;height:26px;color:#000;letter-spacing:0.25px;left:628.50px;">V3.0</div>
<div class="t" style="top:636.99px;font-size:26px;line-height:26px;height:26px;color:#000;letter-spacing:0.25px;left:742.50px;">SOP</div>
<div class="t" style="top:636.99px;font-size:26px;line-height:26px;height:26px;color:#000;letter-spacing:0.25px;left:846.50px;">Source</div>
<div class="t" style="top:636.99px;font-size:26px;line-height:26px;height:26px;color:#000;letter-spacing:0.25px;left:998.50px;">DFP</div>
<div class="t" style="top:636.99px;font-size:26px;line-height:26px;height:26px;color:#000;letter-spacing:0.25px;left:1111.50px;">0</div>
<div class="t" style="top:636.99px;font-size:26px;line-height:26px;height:26px;color:#000;letter-spacing:0.25px;left:1148.50px;">PD Packet</div>
<div class="t" style="top:636.99px;font-size:26px;line-height:26px;height:26px;color:#000;letter-spacing:0.25px;left:1402.50px;">Data</div>
<div class="t" style="top:636.99px;font-size:26px;line-height:26px;height:26px;color:#000;letter-spacing:0.25px;left:1594.50px;">Source Capabilities</div>
<div class="t" style="top:636.99px;font-size:26px;line-height:26px;height:26px;color:#000;letter-spacing:0.4px;left:1876.50px;">0xA1 0x51 0x2C 0x91 0x01 0x0B 0x2C 0xD1 0x02 0x00 0x2C 0xB1 0x04 0x00 0xF4 0x41 0x06 0x00 0x00</div>
<div class="t" style="top:680.37px;font-size:22px;line-height:22px;height:22px;color:#2a2a2a;left:7.00px;">17</div>
<div class="t" style="top:681.23px;font-size:25.8px;line-height:25.8px;height:25.8px;color:#000;font-family:'Liberation Mono', monospace;transform:scaleY(1.12);transform-origin:0 19.77px;-webkit-text-stroke:0.25px #000;left:59.50px;">1136705.110758</div>
<div class="t" style="top:678.99px;font-size:26px;line-height:26px;height:26px;color:#000;letter-spacing:0.25px;left:298.50px;">4</div>
<div class="t" style="top:678.99px;font-size:26px;line-height:26px;height:26px;color:#000;letter-spacing:0.25px;left:404.50px;">Sniff</div>
<div class="t" style="top:678.99px;font-size:26px;line-height:26px;height:26px;color:#000;letter-spacing:0.25px;left:502.50px;">CC1</div>
<div class="t" style="top:678.99px;font-size:26px;line-height:26px;height:26px;color:#000;letter-spacing:0.25px;left:628.50px;">V3.0</div>
<div class="t" style="top:678.99px;font-size:26px;line-height:26px;height:26px;color:#000;letter-spacing:0.25px;left:742.50px;">SOP</div>
<div class="t" style="top:678.99px;font-size:26px;line-height:26px;height:26px;color:#000;letter-spacing:0.25px;left:846.50px;">Source</div>
<div class="t" style="top:678.99px;font-size:26px;line-height:26px;height:26px;color:#000;letter-spacing:0.25px;left:998.50px;">DFP</div>
<div class="t" style="top:678.99px;font-size:26px;line-height:26px;height:26px;color:#000;letter-spacing:0.25px;left:1111.50px;">0</div>
<div class="t" style="top:678.99px;font-size:26px;line-height:26px;height:26px;color:#000;letter-spacing:0.25px;left:1148.50px;">PD Packet</div>
<div class="t" style="top:678.99px;font-size:26px;line-height:26px;height:26px;color:#000;letter-spacing:0.25px;left:1402.50px;">Data</div>
<div class="t" style="top:678.99px;font-size:26px;line-height:26px;height:26px;color:#000;letter-spacing:0.25px;left:1594.50px;">Source Capabilities</div>
<div class="t" style="top:678.99px;font-size:26px;line-height:26px;height:26px;color:#000;letter-spacing:0.4px;left:1876.50px;">0xA1 0x51 0x2C 0x91 0x01 0x0B 0x2C 0xD1 0x02 0x00 0x2C 0xB1 0x04 0x00 0xF4 0x41 0x06 0x00 0x00</div>
</div>
<div style="left:1518.00px;top:949.00px;width:12.00px;height:12.00px;border-radius:50%;background:#d3d3d3;"></div>
<div style="left:10.30px;top:964.00px;width:3026.20px;height:762.50px;border:1px solid #adadad;border-top-color:#8e8e8e;"></div>
<div style="left:14.30px;top:968.00px;width:714.00px;height:755.00px;background:#fff;border:1px solid #acacac;border-top-color:#8e8e8e;"></div>
<div class="t" style="top:997.69px;font-size:26px;line-height:26px;height:26px;color:#000;letter-spacing:0.25px;left:-1128.20px;width:3000px;text-align:center;">Power Data Object 1</div>
<div style="left:15.30px;top:1052.00px;width:712.00px;height:2.00px;background:#dcdcdc;"></div>
<div style="left:15.30px;top:1094.00px;width:712.00px;height:2.00px;background:#dcdcdc;"></div>
<div style="left:15.30px;top:1136.00px;width:712.00px;height:2.00px;background:#dcdcdc;"></div>
<div style="left:15.30px;top:1178.00px;width:712.00px;height:2.00px;background:#dcdcdc;"></div>
<div style="left:15.30px;top:1220.00px;width:712.00px;height:2.00px;background:#dcdcdc;"></div>
<div style="left:15.30px;top:1262.00px;width:712.00px;height:2.00px;background:#dcdcdc;"></div>
<div style="left:15.30px;top:1304.00px;width:712.00px;height:2.00px;background:#dcdcdc;"></div>
<div style="left:15.30px;top:1346.00px;width:712.00px;height:2.00px;background:#dcdcdc;"></div>
<div style="left:15.30px;top:1388.00px;width:712.00px;height:2.00px;background:#dcdcdc;"></div>
<div style="left:15.30px;top:1430.00px;width:712.00px;height:2.00px;background:#dcdcdc;"></div>
<div style="left:15.30px;top:1472.00px;width:712.00px;height:2.00px;background:#dcdcdc;"></div>
<div style="left:15.30px;top:1514.00px;width:712.00px;height:2.00px;background:#dcdcdc;"></div>
<div style="left:15.30px;top:1556.00px;width:712.00px;height:2.00px;background:#dcdcdc;"></div>
<div style="left:509.90px;top:1054.00px;width:2.00px;height:502.00px;background:#dcdcdc;"></div>
<div class="t" style="top:1061.49px;font-size:26px;line-height:26px;height:26px;color:#000;letter-spacing:0.25px;left:24.30px;">PDO Type</div>
<div class="t" style="top:1061.49px;font-size:26px;line-height:26px;height:26px;color:#000;letter-spacing:0.25px;left:519.90px;">Fixed</div>
<div class="t" style="top:1103.49px;font-size:26px;line-height:26px;height:26px;color:#000;letter-spacing:0.25px;left:24.30px;">Max Current</div>
<div class="t" style="top:1103.49px;font-size:26px;line-height:26px;height:26px;color:#000;letter-spacing:0.25px;left:519.90px;">3.000 A (0x12C)</div>
<div class="t" style="top:1145.49px;font-size:26px;line-height:26px;height:26px;color:#000;letter-spacing:0.25px;left:24.30px;">Voltage</div>
<div class="t" style="top:1145.49px;font-size:26px;line-height:26px;height:26px;color:#000;letter-spacing:0.25px;left:519.90px;">5.000 V (0x64)</div>
<div class="t" style="top:1187.49px;font-size:26px;line-height:26px;height:26px;color:#000;letter-spacing:0.25px;left:24.30px;">Peak Current</div>
<div class="t" style="top:1187.49px;font-size:26px;line-height:26px;height:26px;color:#000;letter-spacing:0.25px;left:519.90px;">0x0</div>
<div class="t" style="top:1229.49px;font-size:26px;line-height:26px;height:26px;color:#000;letter-spacing:0.25px;left:24.30px;">Reserved</div>
<div class="t" style="top:1229.49px;font-size:26px;line-height:26px;height:26px;color:#000;letter-spacing:0.25px;left:519.90px;">0x0</div>
<div class="t" style="top:1271.49px;font-size:26px;line-height:26px;height:26px;color:#000;letter-spacing:0.25px;left:24.30px;">EPR Capable</div>
<div class="t" style="top:1271.49px;font-size:26px;line-height:26px;height:26px;color:#000;letter-spacing:0.25px;left:519.90px;">No</div>
<div class="t" style="top:1313.49px;font-size:26px;line-height:26px;height:26px;color:#000;letter-spacing:0.25px;left:24.30px;">Unchunked Extended Message Support</div>
<div class="t" style="top:1313.49px;font-size:26px;line-height:26px;height:26px;color:#000;letter-spacing:0.25px;left:519.90px;">Yes</div>
<div class="t" style="top:1355.49px;font-size:26px;line-height:26px;height:26px;color:#000;letter-spacing:0.25px;left:24.30px;">Dual Role Data Capable</div>
<div class="t" style="top:1355.49px;font-size:26px;line-height:26px;height:26px;color:#000;letter-spacing:0.25px;left:519.90px;">Yes</div>
<div class="t" style="top:1397.49px;font-size:26px;line-height:26px;height:26px;color:#000;letter-spacing:0.25px;left:24.30px;">USB Communications Capable</div>
<div class="t" style="top:1397.49px;font-size:26px;line-height:26px;height:26px;color:#000;letter-spacing:0.25px;left:519.90px;">No</div>
<div class="t" style="top:1439.49px;font-size:26px;line-height:26px;height:26px;color:#000;letter-spacing:0.25px;left:24.30px;">Unconstrained Power</div>
<div class="t" style="top:1439.49px;font-size:26px;line-height:26px;height:26px;color:#000;letter-spacing:0.25px;left:519.90px;">Yes</div>
<div class="t" style="top:1481.49px;font-size:26px;line-height:26px;height:26px;color:#000;letter-spacing:0.25px;left:24.30px;">USB Suspend Supported</div>
<div class="t" style="top:1481.49px;font-size:26px;line-height:26px;height:26px;color:#000;letter-spacing:0.25px;left:519.90px;">No</div>
<div class="t" style="top:1523.49px;font-size:26px;line-height:26px;height:26px;color:#000;letter-spacing:0.25px;left:24.30px;">Dual Role Power Capable</div>
<div class="t" style="top:1523.49px;font-size:26px;line-height:26px;height:26px;color:#000;letter-spacing:0.25px;left:519.90px;">No</div>
<div style="left:750.40px;top:968.00px;width:534.30px;height:755.00px;background:#fff;border:1px solid #acacac;border-top-color:#8e8e8e;"></div>
<div class="t" style="top:997.69px;font-size:26px;line-height:26px;height:26px;color:#000;letter-spacing:0.25px;left:-549.70px;width:3000px;text-align:center;">Power Data Object 2</div>
<div style="left:751.40px;top:1052.00px;width:397.80px;height:2.00px;background:#dcdcdc;"></div>
<div style="left:751.40px;top:1094.00px;width:397.80px;height:2.00px;background:#dcdcdc;"></div>
<div style="left:751.40px;top:1136.00px;width:397.80px;height:2.00px;background:#dcdcdc;"></div>
<div style="left:751.40px;top:1178.00px;width:397.80px;height:2.00px;background:#dcdcdc;"></div>
<div style="left:751.40px;top:1220.00px;width:397.80px;height:2.00px;background:#dcdcdc;"></div>
<div style="left:1148.20px;top:969.00px;width:2.00px;height:253.00px;background:#dcdcdc;"></div>
<div style="left:928.20px;top:1054.00px;width:2.00px;height:166.00px;background:#dcdcdc;"></div>
<div class="t" style="top:1061.49px;font-size:26px;line-height:26px;height:26px;color:#000;letter-spacing:0.25px;left:760.40px;">PDO Type</div>
<div class="t" style="top:1061.49px;font-size:26px;line-height:26px;height:26px;color:#000;letter-spacing:0.25px;left:938.20px;">Fixed</div>
<div class="t" style="top:1103.49px;font-size:26px;line-height:26px;height:26px;color:#000;letter-spacing:0.25px;left:760.40px;">Max Current</div>
<div class="t" style="top:1103.49px;font-size:26px;line-height:26px;height:26px;color:#000;letter-spacing:0.25px;left:938.20px;">3.000 A (0x12C)</div>
<div class="t" style="top:1145.49px;font-size:26px;line-height:26px;height:26px;color:#000;letter-spacing:0.25px;left:760.40px;">Voltage</div>
<div class="t" style="top:1145.49px;font-size:26px;line-height:26px;height:26px;color:#000;letter-spacing:0.25px;left:938.20px;">9.000 V (0xB4)</div>
<div class="t" style="top:1187.49px;font-size:26px;line-height:26px;height:26px;color:#000;letter-spacing:0.25px;left:760.40px;">Peak Current</div>
<div class="t" style="top:1187.49px;font-size:26px;line-height:26px;height:26px;color:#000;letter-spacing:0.25px;left:938.20px;">0x0</div>
<div style="left:1307.00px;top:968.00px;width:533.80px;height:755.00px;background:#fff;border:1px solid #acacac;border-top-color:#8e8e8e;"></div>
<div class="t" style="top:997.69px;font-size:26px;line-height:26px;height:26px;color:#000;letter-spacing:0.25px;left:12.50px;width:3000px;text-align:center;">Power Data Object 3</div>
<div style="left:1308.00px;top:1052.00px;width:409.00px;height:2.00px;background:#dcdcdc;"></div>
<div style="left:1308.00px;top:1094.00px;width:409.00px;height:2.00px;background:#dcdcdc;"></div>
<div style="left:1308.00px;top:1136.00px;width:409.00px;height:2.00px;background:#dcdcdc;"></div>
<div style="left:1308.00px;top:1178.00px;width:409.00px;height:2.00px;background:#dcdcdc;"></div>
<div style="left:1308.00px;top:1220.00px;width:409.00px;height:2.00px;background:#dcdcdc;"></div>
<div style="left:1716.00px;top:969.00px;width:2.00px;height:253.00px;background:#dcdcdc;"></div>
<div style="left:1484.30px;top:1054.00px;width:2.00px;height:166.00px;background:#dcdcdc;"></div>
<div class="t" style="top:1061.49px;font-size:26px;line-height:26px;height:26px;color:#000;letter-spacing:0.25px;left:1317.00px;">PDO Type</div>
<div class="t" style="top:1061.49px;font-size:26px;line-height:26px;height:26px;color:#000;letter-spacing:0.25px;left:1494.30px;">Fixed</div>
<div class="t" style="top:1103.49px;font-size:26px;line-height:26px;height:26px;color:#000;letter-spacing:0.25px;left:1317.00px;">Max Current</div>
<div class="t" style="top:1103.49px;font-size:26px;line-height:26px;height:26px;color:#000;letter-spacing:0.25px;left:1494.30px;">3.000 A (0x12C)</div>
<div class="t" style="top:1145.49px;font-size:26px;line-height:26px;height:26px;color:#000;letter-spacing:0.25px;left:1317.00px;">Voltage</div>
<div class="t" style="top:1145.49px;font-size:26px;line-height:26px;height:26px;color:#000;letter-spacing:0.25px;left:1494.30px;">15.000 V (0x12C)</div>
<div class="t" style="top:1187.49px;font-size:26px;line-height:26px;height:26px;color:#000;letter-spacing:0.25px;left:1317.00px;">Peak Current</div>
<div class="t" style="top:1187.49px;font-size:26px;line-height:26px;height:26px;color:#000;letter-spacing:0.25px;left:1494.30px;">0x0</div>
<div style="left:1862.60px;top:968.00px;width:534.00px;height:755.00px;background:#fff;border:1px solid #acacac;border-top-color:#8e8e8e;"></div>
<div class="t" style="top:997.69px;font-size:26px;line-height:26px;height:26px;color:#000;letter-spacing:0.25px;left:569.15px;width:3000px;text-align:center;">Power Data Object 4</div>
<div style="left:1863.60px;top:1052.00px;width:411.10px;height:2.00px;background:#dcdcdc;"></div>
<div style="left:1863.60px;top:1094.00px;width:411.10px;height:2.00px;background:#dcdcdc;"></div>
<div style="left:1863.60px;top:1136.00px;width:411.10px;height:2.00px;background:#dcdcdc;"></div>
<div style="left:1863.60px;top:1178.00px;width:411.10px;height:2.00px;background:#dcdcdc;"></div>
<div style="left:1863.60px;top:1220.00px;width:411.10px;height:2.00px;background:#dcdcdc;"></div>
<div style="left:2273.70px;top:969.00px;width:2.00px;height:253.00px;background:#dcdcdc;"></div>
<div style="left:2040.20px;top:1054.00px;width:2.00px;height:166.00px;background:#dcdcdc;"></div>
<div class="t" style="top:1061.49px;font-size:26px;line-height:26px;height:26px;color:#000;letter-spacing:0.25px;left:1872.60px;">PDO Type</div>
<div class="t" style="top:1061.49px;font-size:26px;line-height:26px;height:26px;color:#000;letter-spacing:0.25px;left:2050.20px;">Fixed</div>
<div class="t" style="top:1103.49px;font-size:26px;line-height:26px;height:26px;color:#000;letter-spacing:0.25px;left:1872.60px;">Max Current</div>
<div class="t" style="top:1103.49px;font-size:26px;line-height:26px;height:26px;color:#000;letter-spacing:0.25px;left:2050.20px;">5.000 A (0x1F4)</div>
<div class="t" style="top:1145.49px;font-size:26px;line-height:26px;height:26px;color:#000;letter-spacing:0.25px;left:1872.60px;">Voltage</div>
<div class="t" style="top:1145.49px;font-size:26px;line-height:26px;height:26px;color:#000;letter-spacing:0.25px;left:2050.20px;">20.000 V (0x190)</div>
<div class="t" style="top:1187.49px;font-size:26px;line-height:26px;height:26px;color:#000;letter-spacing:0.25px;left:1872.60px;">Peak Current</div>
<div class="t" style="top:1187.49px;font-size:26px;line-height:26px;height:26px;color:#000;letter-spacing:0.25px;left:2050.20px;">0x0</div>
<div style="left:2418.60px;top:968.00px;width:614.10px;height:755.00px;background:#fff;border:1px solid #acacac;border-top-color:#8e8e8e;"></div>
<div class="t" style="top:997.69px;font-size:26px;line-height:26px;height:26px;color:#000;letter-spacing:0.25px;left:1226.15px;width:3000px;text-align:center;">Power Data Object 5</div>
<div style="left:2419.60px;top:1052.00px;width:612.10px;height:2.00px;background:#dcdcdc;"></div>
<div style="left:2419.60px;top:1094.00px;width:612.10px;height:2.00px;background:#dcdcdc;"></div>
<div style="left:2419.60px;top:1136.00px;width:612.10px;height:2.00px;background:#dcdcdc;"></div>
<div style="left:2419.60px;top:1178.00px;width:612.10px;height:2.00px;background:#dcdcdc;"></div>
<div style="left:2419.60px;top:1220.00px;width:612.10px;height:2.00px;background:#dcdcdc;"></div>
<div style="left:2419.60px;top:1262.00px;width:612.10px;height:2.00px;background:#dcdcdc;"></div>
<div style="left:2419.60px;top:1304.00px;width:612.10px;height:2.00px;background:#dcdcdc;"></div>
<div style="left:2419.60px;top:1346.00px;width:612.10px;height:2.00px;background:#dcdcdc;"></div>
<div style="left:2419.60px;top:1388.00px;width:612.10px;height:2.00px;background:#dcdcdc;"></div>
<div style="left:2419.60px;top:1430.00px;width:612.10px;height:2.00px;background:#dcdcdc;"></div>
<div style="left:2665.60px;top:1054.00px;width:2.00px;height:376.00px;background:#dcdcdc;"></div>
<div class="t" style="top:1061.49px;font-size:26px;line-height:26px;height:26px;color:#000;letter-spacing:0.25px;left:2428.60px;">PDO Type</div>
<div class="t" style="top:1061.49px;font-size:26px;line-height:26px;height:26px;color:#000;letter-spacing:0.25px;left:2675.60px;">APDO</div>
<div class="t" style="top:1103.49px;font-size:26px;line-height:26px;height:26px;color:#000;letter-spacing:0.25px;left:2428.60px;">APDO Type</div>
<div class="t" style="top:1103.49px;font-size:26px;line-height:26px;height:26px;color:#000;letter-spacing:0.25px;left:2675.60px;">Programmable Power Supply</div>
<div class="t" style="top:1145.49px;font-size:26px;line-height:26px;height:26px;color:#000;letter-spacing:0.25px;left:2428.60px;">Max Current</div>
<div class="t" style="top:1145.49px;font-size:26px;line-height:26px;height:26px;color:#000;letter-spacing:0.25px;left:2675.60px;">3.000 A (0x3C)</div>
<div class="t" style="top:1187.49px;font-size:26px;line-height:26px;height:26px;color:#000;letter-spacing:0.25px;left:2428.60px;">Min Voltage</div>
<div class="t" style="top:1187.49px;font-size:26px;line-height:26px;height:26px;color:#000;letter-spacing:0.25px;left:2675.60px;">3.300 V (0x21)</div>
<div class="t" style="top:1229.49px;font-size:26px;line-height:26px;height:26px;color:#000;letter-spacing:0.25px;left:2428.60px;">Max Voltage</div>
<div class="t" style="top:1229.49px;font-size:26px;line-height:26px;height:26px;color:#000;letter-spacing:0.25px;left:2675.60px;">21.000 V (0xD2)</div>
<div class="t" style="top:1271.49px;font-size:26px;line-height:26px;height:26px;color:#000;letter-spacing:0.25px;left:2428.60px;">PPS Power Limited</div>
<div class="t" style="top:1271.49px;font-size:26px;line-height:26px;height:26px;color:#000;letter-spacing:0.25px;left:2675.60px;">No</div>
<div class="t" style="top:1313.49px;font-size:26px;line-height:26px;height:26px;color:#000;letter-spacing:0.25px;left:2428.60px;">Reserved 1</div>
<div class="t" style="top:1313.49px;font-size:26px;line-height:26px;height:26px;color:#000;letter-spacing:0.25px;left:2675.60px;">0x0</div>
<div class="t" style="top:1355.49px;font-size:26px;line-height:26px;height:26px;color:#000;letter-spacing:0.25px;left:2428.60px;">Reserved 2</div>
<div class="t" style="top:1355.49px;font-size:26px;line-height:26px;height:26px;color:#000;letter-spacing:0.25px;left:2675.60px;">0x0</div>
<div class="t" style="top:1397.49px;font-size:26px;line-height:26px;height:26px;color:#000;letter-spacing:0.25px;left:2428.60px;">Reserved 3</div>
<div class="t" style="top:1397.49px;font-size:26px;line-height:26px;height:26px;color:#000;letter-spacing:0.25px;left:2675.60px;">0x0</div>
<div style="left:2652.00px;top:1740.00px;width:28.00px;height:28.00px;border-radius:6px;background:linear-gradient(#3a94ff,#0a77ff);"></div>
<svg style="left:2652px;top:1740px" width="28" height="28" viewBox="0 0 28 28"><path d="M6 14.5 L11.5 20 L21.5 6.5" fill="none" stroke="#fff" stroke-width="3.4" stroke-linecap="round" stroke-linejoin="round"/></svg>
<div class="t" style="top:1741.99px;font-size:26px;line-height:26px;height:26px;color:#1a1a1a;letter-spacing:0.25px;left:2687.00px;">Show Graph</div>
<div style="left:2852.00px;top:1740.00px;width:28.00px;height:28.00px;border-radius:6px;background:#fff;box-shadow:0 0 0 1px rgba(0,0,0,0.16),0 1px 1px rgba(0,0,0,0.12);"></div>
<div class="t" style="top:1741.99px;font-size:26px;line-height:26px;height:26px;color:#1a1a1a;letter-spacing:0.25px;left:2887.00px;">Auto Export</div>
<div style="left:0.00px;top:1896.00px;width:3048.00px;height:1.00px;background:#b2b2b2;"></div>
<div style="left:1518.00px;top:1899.00px;width:12.00px;height:12.00px;border-radius:50%;background:#d3d3d3;"></div>
<div style="left:6.40px;top:1912.00px;width:2518.60px;height:240.50px;background:#fff;border:1px solid #adadad;border-top-color:#8e8e8e;"></div>
<div style="left:7.400000000000006px;top:1913px;width:2516.6px;height:238.5px;overflow:hidden;">
<div class="t" style="top:3.99px;font-size:26px;line-height:26px;height:26px;color:#1e1e1e;letter-spacing:0.1px;left:7.90px;">Serial Control Feature (T105-SERIAL): Enabled</div>
<div class="t" style="top:35.99px;font-size:26px;line-height:26px;height:26px;color:#1e1e1e;letter-spacing:0.1px;left:7.90px;">BrainStem aEther discovery: Disabled</div>
<div class="t" style="top:67.99px;font-size:26px;line-height:26px;height:26px;color:#1e1e1e;letter-spacing:0.1px;left:7.90px;">TCP/IP discovery: Disabled</div>
<div class="t" style="top:99.99px;font-size:26px;line-height:26px;height:26px;color:#1e1e1e;letter-spacing:0.1px;left:7.90px;">TCP/IP discovery: Enabled</div>
<div class="t" style="top:131.99px;font-size:26px;line-height:26px;height:26px;color:#1e1e1e;letter-spacing:0.1px;left:7.90px;">PD Logger (T105-PD-LOG): Enabled</div>
<div class="t" style="top:163.99px;font-size:26px;line-height:26px;height:26px;color:#1e1e1e;letter-spacing:0.1px;left:7.90px;">Serial Control Feature (T105-SERIAL): Enabled</div>
<div class="t" style="top:195.99px;font-size:26px;line-height:26px;height:26px;color:#1e1e1e;letter-spacing:0.1px;left:7.90px;">TCP/IP discovery: Disabled</div>
<div class="t" style="top:227.99px;font-size:26px;line-height:26px;height:26px;color:#1e1e1e;letter-spacing:0.1px;left:7.90px;">TCP/IP discovery: Enabled</div>
</div>
<div style="left:2530.60px;top:1912.00px;width:509.90px;height:192.50px;background:#fff;border:1px solid #adadad;border-top-color:#8e8e8e;"></div>
<div style="left:2531.60px;top:1913.00px;width:507.90px;height:35.00px;background:#ebebeb;"></div>
<div style="left:2531.60px;top:1948.00px;width:507.90px;height:39.50px;background:#d5d5d5;"></div>
<div style="left:2742.00px;top:1917.00px;width:2.00px;height:26.00px;background:#bfbfbf;"></div>
<div style="left:2928.00px;top:1917.00px;width:2.00px;height:26.00px;background:#bfbfbf;"></div>
<div style="left:2980.00px;top:1917.00px;width:2.00px;height:26.00px;background:#bfbfbf;"></div>
<div style="left:3037.50px;top:1917.00px;width:2.00px;height:26.00px;background:#bdbdbd;"></div>
<div class="t" style="top:1918.37px;font-size:22px;line-height:22px;height:22px;color:#222;letter-spacing:0.6px;left:2539.70px;">Device Type:</div>
<div class="t" style="top:1918.37px;font-size:22px;line-height:22px;height:22px;color:#222;letter-spacing:0.6px;left:2751.20px;">Serial Number:</div>
<div class="t" style="top:1954.59px;font-size:26px;line-height:26px;height:26px;color:#000;letter-spacing:0.25px;left:2540.00px;">USBCSwitchPro</div>
<div class="t" style="top:1954.59px;font-size:26px;line-height:26px;height:26px;color:#000;letter-spacing:0.9px;left:2752.00px;">F454223B</div>
<svg style="left:2938px;top:1950px" width="36" height="36" viewBox="3050 2026 36 36" fill="none" stroke="#1f2f42" stroke-width="2"><rect x="3063.2" y="2029.2" width="9.6" height="9.4"/><line x1="3068" y1="2039" x2="3068" y2="2043"/><line x1="3052.2" y1="2043.9" x2="3083.8" y2="2043.9" stroke-width="2"/><line x1="3058" y1="2044" x2="3058" y2="2048.5"/><line x1="3078.1" y1="2044" x2="3078.1" y2="2048.5"/><rect x="3053.2" y="2049.3" width="9.6" height="9.6"/><rect x="3073.3" y="2049.3" width="9.6" height="9.6"/></svg>
<div style="left:2532.00px;top:2116.00px;width:508.00px;height:40.00px;border-radius:10px;background:#fff;box-shadow:0 0 0 1px rgba(0,0,0,0.10),0 1px 1px rgba(0,0,0,0.18);"></div>
<div class="t" style="top:2122.49px;font-size:26px;line-height:26px;height:26px;color:#000;letter-spacing:0.25px;left:1286.00px;width:3000px;text-align:center;">Firmware Management</div>
</div></body></html>
